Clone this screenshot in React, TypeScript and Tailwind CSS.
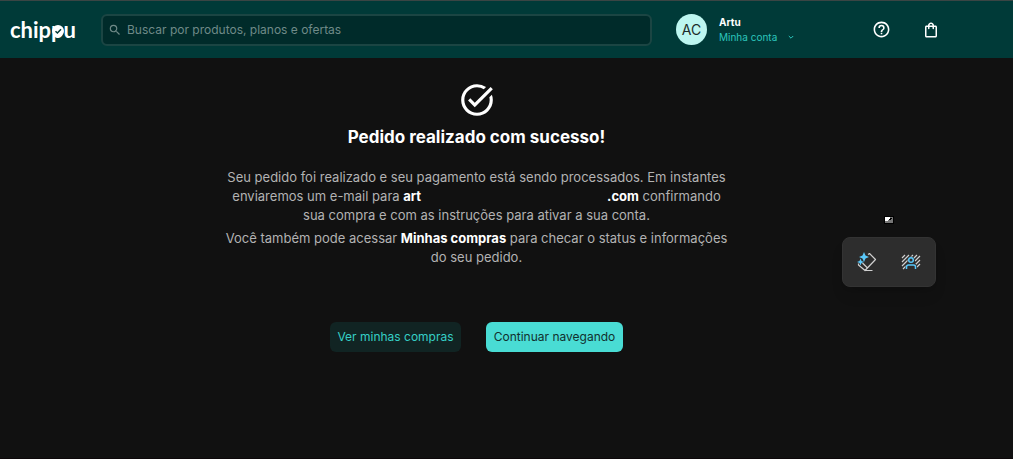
import React from "react";

function Logo() {
  return (
    <a href="#" aria-label="chippu" className="relative block w-[67px] shrink-0 font-['Lato',sans-serif] text-[22px] leading-[28px] font-bold text-white">
      chippu
      <svg viewBox="0 0 12 12" className="absolute top-[9px] left-[42px] size-[12px]" aria-hidden="true">
        <circle cx="6" cy="6" r="6" fill="#fff" />
        <path d="M3.5 6.2 5.4 8 9 4.2" fill="none" stroke="#003a38" strokeWidth="1.5" />
      </svg>
    </a>
  );
}

function SearchBox() {
  return (
    <form role="search" className="ml-[24px] flex h-[32px] w-[551px] items-center gap-[5px] rounded-[6px] border-2 border-[#1b4543] bg-[#002b2a] px-[5px]">
      <svg viewBox="0 0 24 24" className="size-[14px] shrink-0" fill="#6f8a88" aria-hidden="true">
        <path d="M15.5 14h-.79l-.28-.27A6.47 6.47 0 0 0 16 9.5 6.5 6.5 0 1 0 9.5 16c1.61 0 3.09-.59 4.23-1.57l.27.28v.79l5 4.99L20.49 19l-4.99-5zm-6 0C7.01 14 5 11.99 5 9.5S7.01 5 9.5 5 14 7.01 14 9.5 11.99 14 9.5 14z" />
      </svg>
      <input
        type="search"
        aria-label="Buscar"
        placeholder="Buscar por produtos, planos e ofertas"
        className="min-w-0 flex-1 bg-transparent text-[12px] text-white outline-none placeholder:text-[#6f8a88]"
      />
    </form>
  );
}

function Header() {
  return (
    <header className="flex h-[58px] items-center border-t border-[#3a4544] bg-[#003a38] pl-[10px]">
      <Logo />
      <SearchBox />
      <button type="button" className="ml-[24px] flex items-center gap-[12px] text-left">
        <span className="flex size-[31px] items-center justify-center rounded-full bg-[#bdf6f0] text-[14px] text-[#1c2b2a]">AC</span>
        <span className="flex w-[76px] flex-col text-[10px] leading-[15px]">
          <span className="font-bold text-white">Artu</span>
          <span className="flex items-center justify-between whitespace-nowrap text-[#2cc5bd]">
            Minha conta
            <svg viewBox="0 0 8 8" className="size-[8px]" fill="none" stroke="currentColor" aria-hidden="true">
              <path d="m1.8 3 2.2 2.2L6.2 3" />
            </svg>
          </span>
        </span>
      </button>
      <button type="button" aria-label="Ajuda" className="ml-[77px]">
        <svg viewBox="0 0 24 24" className="size-[19px]" fill="#fff" aria-hidden="true">
          <path d="M11 18h2v-2h-2v2zm1-16C6.48 2 2 6.48 2 12s4.48 10 10 10 10-4.48 10-10S17.52 2 12 2zm0 18c-4.41 0-8-3.59-8-8s3.59-8 8-8 8 3.59 8 8-3.59 8-8 8zm0-14a4 4 0 0 0-4 4h2a2 2 0 1 1 4 0c0 2-3 1.75-3 5h2c0-2.25 3-2.5 3-5a4 4 0 0 0-4-4z" />
        </svg>
      </button>
      <button type="button" aria-label="Sacola" className="ml-[31px]">
        <svg viewBox="0 0 24 24" className="size-[18px]" fill="#fff" aria-hidden="true">
          <path d="M18 6h-2c0-2.21-1.79-4-4-4S8 3.790 8 6H6c-1.100 0-2 .9-2 2v12c0 1.100.9 2 2 2h12c1.100 0 2-.9 2-2V8c0-1.100-.9-2-2-2zm-6-2c1.100 0 2 .9 2 2h-4c0-1.100.9-2 2-2zm6 16H6V8h2v2c0 .55.45 1 1 1s1-.45 1-1V8h4v2c0 .55.45 1 1 1s1-.45 1-1V8h2v12z" />
        </svg>
      </button>
    </header>
  );
}

function FloatingTools() {
  return (
    <aside className="absolute top-[216px] left-[842px] flex flex-col items-center">
      <svg viewBox="0 0 10 8" className="h-[8px] w-[10px]" aria-hidden="true">
        <rect width="10" height="8" fill="#000" />
        <path d="M4 1h5v6H1V5h3z" fill="#777" />
        <path d="M1 1h5v2H5v1H4v1H1z" fill="#fff" />
        <path d="M6 2h2v1H7v1H5V3h1z" fill="#000" />
      </svg>
      <div className="mt-[13px] flex h-[50px] w-[94px] items-center justify-center gap-[24px] rounded-[8px] border border-[#333] bg-[#2d2d2d] shadow-lg">
        <button type="button" aria-label="Apagar">
          <svg viewBox="0 0 20 20" className="size-[20px]" fill="none" aria-hidden="true">
            <path d="M11 2.5 12.5 1.5 18.5 7.5 8 18.5 1.5 13v-1.5M5.500 11l5 5M7.500 18.500h8" stroke="#d0d0d0" strokeWidth="1.2" strokeLinejoin="round" />
            <path d="M7 0 8.5 3.5 12 5 8.5 6.5 7 10 5.5 6.5 2 5 5.500 3.500ZM3.500 6.500l1 2.500 2.500 1-2.500 1-1 2.500-1-2.500L0 10l2.500-1Z" fill="#5ac8fa" />
          </svg>
        </button>
        <button type="button" aria-label="Remover fundo">
          <svg viewBox="0 0 20 20" className="size-[20px]" fill="none" aria-hidden="true">
            <path d="M1 6l3-3M1 10l7-7M1 14l11-11M2 17l3-3M12 7l4-4M14 9l5-5M14 13l5-5M16 15l3-3" stroke="#d0d0d0" strokeWidth="1.2" />
            <path d="M4.500 17v-3q0-2.500 2.500-2.500h6q2.500 0 2.500 2.500v3z" fill="#2d2d2d" />
            <circle cx="10" cy="8" r="3.500" fill="#2d2d2d" />
            <circle cx="10" cy="8" r="2.300" stroke="#5ac8fa" strokeWidth="1.500" />
            <path d="M5.500 17v-2a2 2 0 0 1 2-2h5a2 2 0 0 1 2 2v2" stroke="#5ac8fa" strokeWidth="1.500" />
          </svg>
        </button>
      </div>
    </aside>
  );
}

export default function App() {
  return (
    <div className="relative min-h-screen border-b border-[#0d080a] bg-[#111] font-['Inter',sans-serif]">
      <Header />
      <main className="flex flex-col items-center pt-[23px] pr-[60px] text-center">
        <svg viewBox="0 0 24 24" className="size-[38px]" fill="#fff" aria-hidden="true">
          <path d="M22 5.18 10.59 16.6l-4.24-4.24 1.41-1.41 2.83 2.83 10-10L22 5.18zm-2.21 5.04c.13.57.21 1.17.21 1.78 0 4.42-3.58 8-8 8s-8-3.58-8-8 3.58-8 8-8c1.58 0 3.04.46 4.28 1.25l1.44-1.44A9.9 9.9 0 0 0 12 2C6.48 2 2 6.48 2 12s4.48 10 10 10 10-4.48 10-10c0-1.19-.22-2.33-.6-3.39l-1.61 1.61z" />
        </svg>
        <h1 className="mt-[5px] text-[17px] leading-[26px] font-bold text-white">Pedido realizado com sucesso!</h1>
        <p className="mt-[18px] text-[13px] leading-[19px] text-[#b3b3b3]">
          Seu pedido foi realizado e seu pagamento está sendo processados. Em instantes
          <br />
          enviaremos um e-mail para <strong className="text-white">art<span className="inline-block w-[186px]" />.com</strong> confirmando
          <br />
          sua compra e com as instruções para ativar a sua conta.
        </p>
        <p className="mt-[4px] text-[13px] leading-[19px] text-[#b3b3b3]">
          Você também pode acessar <strong className="text-white">Minhas compras</strong> para checar o status e informações
          <br />
          do seu pedido.
        </p>
        <div className="mt-[55px] flex gap-[25px] text-[12px]">
          <button type="button" className="h-[30px] w-[131px] rounded-[6px] bg-[#112423] text-[#35cfc6]">Ver minhas compras</button>
          <button type="button" className="h-[30px] w-[137px] rounded-[6px] bg-[#49dcd4] text-[#12302e]">Continuar navegando</button>
        </div>
      </main>
      <FloatingTools />
    </div>
  );
}
